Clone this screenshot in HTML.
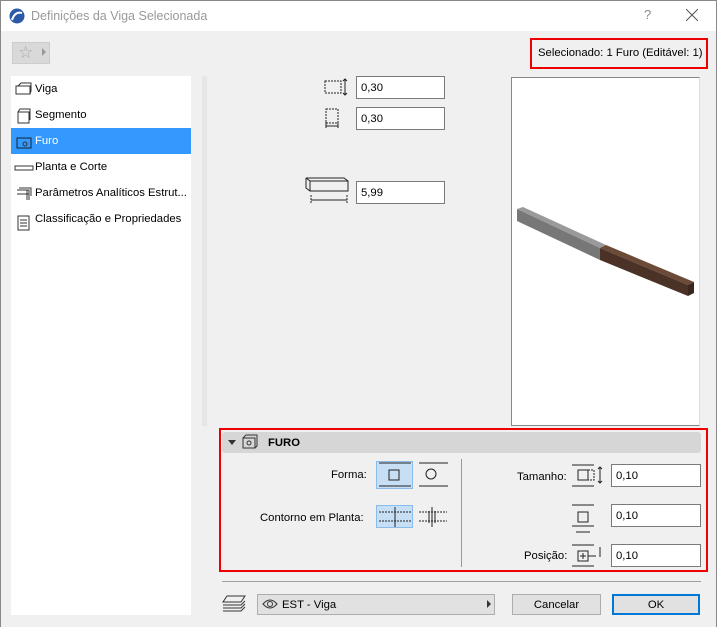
<!DOCTYPE html>
<html><head><meta charset="utf-8"><style>
*{box-sizing:border-box;margin:0;padding:0}
body{width:717px;height:627px;background:#f0f0f0;font-family:"Liberation Sans",sans-serif;font-size:11.3px;color:#000;position:relative;overflow:hidden}
.a{position:absolute;white-space:nowrap}
.in{position:absolute;background:#fff;border:1px solid #7a7a7a;height:23px;padding:5px 0 0 4px}
.it{position:absolute;left:0;width:180px;height:26px;padding:7px 0 0 24px;white-space:nowrap;overflow:hidden}
.btn{position:absolute;background:#e1e1e1;border:1px solid #adadad;height:21px;text-align:center;padding-top:4px}
</style></head><body>
<div class="a" style="left:0;top:0;width:717px;height:31px;background:#fff;border:1px solid #888;border-bottom:none"></div>
<svg class="a" style="left:9px;top:8px" width="16" height="16"><circle cx="8" cy="8" r="7.5" fill="#2a5aa8"/><path d="M3 12 Q6 3 13 5" stroke="#fff" stroke-width="2" fill="none"/></svg>
<div class="a" style="left:31px;top:9px;color:#999;font-size:12.5px">Definições da Viga Selecionada</div>
<div class="a" style="left:644px;top:7px;color:#888;font-size:13px">?</div>
<svg class="a" style="left:686px;top:9px" width="12" height="12"><path d="M0 0L12 12M12 0L0 12" stroke="#555" stroke-width="1"/></svg>
<div class="a" style="left:0;top:31px;width:1px;height:596px;background:#888"></div>
<div class="a" style="left:716px;top:31px;width:1px;height:596px;background:#888"></div>
<div class="a" style="left:12px;top:42px;width:38px;height:22px;background:#d9d9d9;border:1px solid #ccc"></div>
<div class="a" style="left:18px;top:43px;color:#aaa;font-size:17px">☆</div>
<div class="a" style="left:42px;top:48px;width:0;height:0;border-left:4px solid #999;border-top:4px solid transparent;border-bottom:4px solid transparent"></div>
<div class="a" style="left:530px;top:38px;width:178px;height:31px;border:2px solid #e00"></div>
<div class="a" style="left:538px;top:47px">Selecionado: 1 Furo (Editável: 1)</div>
<div class="a" style="left:11px;top:76px;width:180px;height:539px;background:#fff">
<div class="it" style="top:0">Viga</div>
<div class="it" style="top:26px">Segmento</div>
<div class="it" style="top:52px;background:#3399ff;color:#fff">Furo</div>
<div class="it" style="top:78px">Planta e Corte</div>
<div class="it" style="top:104px">Parâmetros Analíticos Estrut...</div>
<div class="it" style="top:130px">Classificação e Propriedades</div>
<svg class="a" style="left:3px;top:4px" width="20" height="160" fill="none" stroke="#333"><rect x="2" y="6" width="14" height="8"/><path d="M4 6l3-3h10v8l-1 3"/><rect x="4" y="32" width="11" height="11"/><path d="M4 32l2-3h10v11"/><rect x="3" y="58" width="14" height="10" stroke="#123"/><circle cx="11" cy="64" r="2"/><rect x="1" y="86" width="18" height="4"/><path d="M5 108h12v8M3 110h12v10M3 114h12M13 110v10"/><rect x="4" y="136" width="11" height="14"/><path d="M6 140h7M6 143h7M6 146h7"/></svg>
</div>
<div class="a" style="left:202px;top:76px;width:5px;height:350px;background:#e6e6e6"></div>
<svg class="a" style="left:320px;top:76px" width="40" height="60" fill="none" stroke="#222"><rect x="5" y="5" width="16" height="12" stroke-dasharray="2 1"/><path d="M25 3v16M23 5l2-2 2 2M23 17l2 2 2-2"/><rect x="6" y="33" width="12" height="14" stroke-dasharray="2 1"/><path d="M6 46v6M18 46v6M6 50h12"/></svg>
<svg class="a" style="left:305px;top:176px" width="45" height="30" fill="none" stroke="#222"><rect x="5" y="5" width="38" height="10"/><path d="M1 2h38l4 3M1 2l4 3M1 2v10l4 3"/><path d="M6 24h36" /><path d="M6 19v8M42 19v8" stroke-dasharray="2 1"/></svg>
<div class="in" style="left:356px;top:76px;width:89px">0,30</div>
<div class="in" style="left:356px;top:107px;width:89px">0,30</div>
<div class="in" style="left:356px;top:181px;width:89px">5,99</div>
<div class="a" style="left:511px;top:77px;width:189px;height:349px;background:#fff;border:1px solid #888;border-right-color:#ddd"></div>
<svg class="a" style="left:511px;top:77px" width="189" height="349"><polygon points="6,132 12,130 95,168 89,171" fill="#9a9a9a"/><polygon points="6,132 89,171 89,183 6,144" fill="#777"/><polygon points="89,171 95,168 183,205 177,208" fill="#6b4a38"/><polygon points="89,171 177,208 177,219 89,183" fill="#4a3226"/><polygon points="177,208 183,205 183,216 177,219" fill="#3a281e"/></svg>
<div class="a" style="left:219px;top:428px;width:489px;height:144px;border:2px solid #e00"></div>
<div class="a" style="left:222px;top:432px;width:479px;height:21px;background:#d6d6d6;border-radius:3px"></div>
<div class="a" style="left:228px;top:440px;border-top:5px solid #333;border-left:4px solid transparent;border-right:4px solid transparent"></div>
<svg class="a" style="left:241px;top:434px" width="20" height="16" fill="none" stroke="#333"><rect x="2" y="4" width="12" height="10"/><path d="M2 4l3-3h11v11l-2 2"/><circle cx="8" cy="9" r="2"/></svg>
<div class="a" style="left:268px;top:437px;font-weight:bold">FURO</div>
<div class="a" style="left:331px;top:469px">Forma:</div>
<div class="a" style="left:376px;top:461px;width:37px;height:28px;background:#c6dff5;border:1px solid #8bbbe8"></div>
<svg class="a" style="left:376px;top:461px" width="72" height="28" fill="none" stroke="#222"><path d="M3 2h32M3 25h32M43 2h30M43 25h30"/><rect x="13" y="9" width="10" height="10"/><circle cx="55" cy="13" r="5"/></svg>
<div class="a" style="left:260px;top:512px">Contorno em Planta:</div>
<div class="a" style="left:376px;top:505px;width:37px;height:23px;background:#c6dff5;border:1px solid #8bbbe8"></div>
<svg class="a" style="left:376px;top:505px" width="72" height="24" fill="none" stroke="#222"><path d="M3 7h32M3 16h32M43 7h28M43 16h28" stroke-dasharray="2 1"/><path d="M19 2v20M56 2v20M53 6v12M59 6v12"/></svg>
<div class="a" style="left:461px;top:459px;width:1px;height:108px;background:#999"></div>
<div class="a" style="left:517px;top:471px">Tamanho:</div>
<div class="a" style="left:524px;top:550px">Posição:</div>
<svg class="a" style="left:571px;top:463px" width="36" height="108" fill="none" stroke="#222"><path d="M1 2h22M1 23h22M1 42h22"/><rect x="7" y="7" width="10" height="10"/><path d="M17 7h6v10h-6" stroke-dasharray="2 1"/><path d="M29 4v16M27 6l2-2 2 2M27 18l2 2 2-2"/><rect x="7" y="49" width="10" height="10"/><path d="M1 63h22M5 69h14"/><path d="M1 82h22M1 103h22"/><rect x="7" y="88" width="10" height="10"/><path d="M12 90v6M9 93h6M17 93h8M29 84v10"/></svg>
<div class="in" style="left:611px;top:464px;width:90px">0,10</div>
<div class="in" style="left:611px;top:504px;width:90px">0,10</div>
<div class="in" style="left:611px;top:544px;width:90px">0,10</div>
<div class="a" style="left:222px;top:581px;width:479px;height:1px;background:#a0a0a0"></div>
<svg class="a" style="left:222px;top:594px" width="26" height="20" fill="none" stroke="#333"><path d="M5 2h18l-4 6H1zM1 11h18l4-4M1 14h18l4-4M1 17h18l4-4"/></svg>
<div class="a" style="left:257px;top:594px;width:238px;height:21px;background:#e1e1e1;border:1px solid #adadad"></div>
<svg class="a" style="left:262px;top:598px" width="16" height="12" fill="none" stroke="#333"><path d="M1 6Q8-2 15 6Q8 14 1 6z"/><circle cx="8" cy="6" r="2.5"/></svg>
<div class="a" style="left:282px;top:599px">EST - Viga</div>
<div class="a" style="left:487px;top:600px;border-left:4px solid #333;border-top:4px solid transparent;border-bottom:4px solid transparent"></div>
<div class="btn" style="left:512px;top:594px;width:89px">Cancelar</div>
<div class="btn" style="left:612px;top:594px;width:88px;border:2px solid #0078d7;padding-top:3px">OK</div>
</body></html>
